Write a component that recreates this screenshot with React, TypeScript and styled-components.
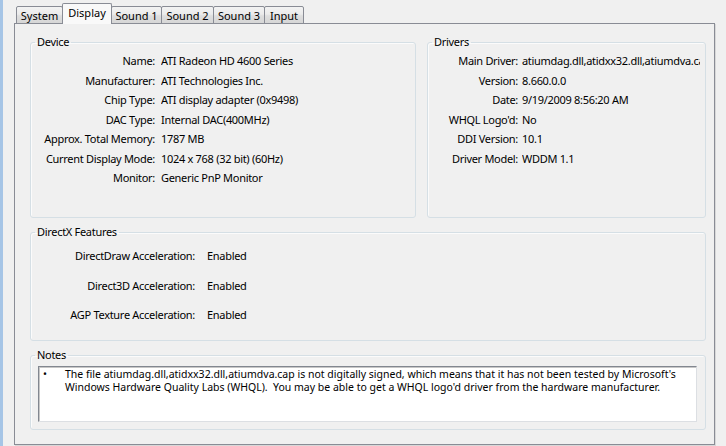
import styled, { createGlobalStyle } from "styled-components";

const GlobalStyle = createGlobalStyle`
  html, body {
    margin: 0;
    padding: 0;
    background: #f0f0f0;
  }
  body {
    font-family: "Noto Sans", "Open Sans", sans-serif;
    font-size: 11px;
    letter-spacing: -0.3px;
    color: #000;
  }
`;

const Window = styled.div`
  width: 726px;
  height: 446px;
  box-sizing: border-box;
  border-left: 3px solid #a6c5e6;
  padding: 3px 11px 1px 11px;
  display: flex;
  flex-direction: column;
  overflow: hidden;
  background: #f0f0f0;
`;

const TabStrip = styled.div`
  display: flex;
  align-items: flex-end;
  padding-left: 2px;
  margin-bottom: -1px;
  position: relative;
  z-index: 1;
`;

const Tab = styled.div<{ $w: number; $active?: boolean }>`
  box-sizing: border-box;
  width: ${(p) => p.$w}px;
  height: ${(p) => (p.$active ? 21 : 18)}px;
  margin-left: -1px;
  border: 1px solid #898c95;
  border-bottom: ${(p) => (p.$active ? "none" : "1px solid #898c95")};
  border-radius: 2px 2px 0 0;
  background: ${(p) =>
    p.$active
      ? "#f9f9f9"
      : "linear-gradient(#f3f3f3, #ebebeb 45%, #dedede 55%, #d6d6d6)"};
  display: flex;
  align-items: center;
  justify-content: center;
  line-height: 1;
  letter-spacing: 0;
  padding-bottom: ${(p) => (p.$active ? 3 : 0)}px;
  white-space: nowrap;
  &:first-child {
    margin-left: 0;
  }
`;

const Pane = styled.div`
  flex: 1;
  border: 1px solid #898c95;
  background: #f0f0f0;
  padding: 11px 8px 14px 15px;
  display: flex;
  flex-direction: column;
  gap: 7px;
  box-shadow: 1px 1px 0 #d8d8d8;
`;

const TopRow = styled.div`
  display: grid;
  grid-template-columns: 386px 1fr;
  column-gap: 11px;
`;

const GroupBox = styled.fieldset<{ $h: number }>`
  box-sizing: border-box;
  height: ${(p) => p.$h}px;
  margin: 0;
  padding: 0;
  min-width: 0;
  border: 1px solid #d5dfe5;
  border-radius: 3px;
  box-shadow: inset 1px 1px 0 #fbfbfb;
`;

const Legend = styled.legend`
  margin-left: 4px;
  padding: 0 2px;
  line-height: 14px;
  font-size: 11px;
`;

const Rows = styled.div<{ $label: number; $gap: number; $row: number }>`
  display: grid;
  grid-template-columns: ${(p) => p.$label}px 1fr;
  column-gap: ${(p) => p.$gap}px;
  grid-auto-rows: ${(p) => p.$row}px;
  line-height: ${(p) => p.$row}px;
  padding: 2px 5px 0 0;
`;

const Label = styled.div`
  text-align: right;
  white-space: nowrap;
`;

const Value = styled.div`
  white-space: nowrap;
  overflow: hidden;
`;

const NotesBody = styled.div`
  padding: 4px 8px 0 7px;
`;

const NotesBox = styled.div`
  box-sizing: border-box;
  height: 56px;
  background: #fff;
  border: 1px solid #dcdfe3;
  border-top-color: #828790;
  border-left-color: #828790;
  box-shadow: inset 1px 1px 0 #c7c7c7;
  padding: 1px 4px;
  display: flex;
  font-size: 10.5px;
  letter-spacing: 0;
  line-height: 13px;
`;

const Bullet = styled.span`
  width: 22px;
  flex: none;
`;

const device: [string, string][] = [
  ["Name:", "ATI Radeon HD 4600 Series"],
  ["Manufacturer:", "ATI Technologies Inc."],
  ["Chip Type:", "ATI display adapter (0x9498)"],
  ["DAC Type:", "Internal DAC(400MHz)"],
  ["Approx. Total Memory:", "1787 MB"],
  ["Current Display Mode:", "1024 x 768 (32 bit) (60Hz)"],
  ["Monitor:", "Generic PnP Monitor"],
];

const drivers: [string, string][] = [
  ["Main Driver:", "atiumdag.dll,atidxx32.dll,atiumdva.cap"],
  ["Version:", "8.660.0.0"],
  ["Date:", "9/19/2009 8:56:20 AM"],
  ["WHQL Logo'd:", "No"],
  ["DDI Version:", "10.1"],
  ["Driver Model:", "WDDM 1.1"],
];

const features: [string, string][] = [
  ["DirectDraw Acceleration:", "Enabled"],
  ["Direct3D Acceleration:", "Enabled"],
  ["AGP Texture Acceleration:", "Enabled"],
];

const tabs: [string, number][] = [
  ["System", 47],
  ["Display", 50],
  ["Sound 1", 51],
  ["Sound 2", 53],
  ["Sound 3", 52],
  ["Input", 40],
];

function renderRows(items: [string, string][]) {
  return items.map(([k, v]) => [
    <Label key={k + "l"}>{k}</Label>,
    <Value key={k + "v"}>{v}</Value>,
  ]);
}

export default function App() {
  return (
    <Window>
      <GlobalStyle />
      <TabStrip>
        {tabs.map(([name, w]) => (
          <Tab key={name} $w={w} $active={name === "Display"}>
            {name}
          </Tab>
        ))}
      </TabStrip>
      <Pane>
        <TopRow>
          <GroupBox $h={183}>
            <Legend>Device</Legend>
            <Rows $label={124} $gap={6} $row={19.5}>
              {renderRows(device)}
            </Rows>
          </GroupBox>
          <GroupBox $h={183}>
            <Legend>Drivers</Legend>
            <Rows $label={90} $gap={4} $row={19.5}>
              {renderRows(drivers)}
            </Rows>
          </GroupBox>
        </TopRow>
        <GroupBox $h={116}>
          <Legend>DirectX Features</Legend>
          <Rows $label={164} $gap={12} $row={29.5}>
            {renderRows(features)}
          </Rows>
        </GroupBox>
        <GroupBox $h={82}>
          <Legend>Notes</Legend>
          <NotesBody>
            <NotesBox>
              <Bullet>•</Bullet>
              <div>
                The file atiumdag.dll,atidxx32.dll,atiumdva.cap is not digitally
                signed, which means that it has not been tested by Microsoft's
                <br />
                Windows Hardware Quality Labs (WHQL).&nbsp; You may be able to get a
                WHQL logo'd driver from the hardware manufacturer.
              </div>
            </NotesBox>
          </NotesBody>
        </GroupBox>
      </Pane>
    </Window>
  );
}
